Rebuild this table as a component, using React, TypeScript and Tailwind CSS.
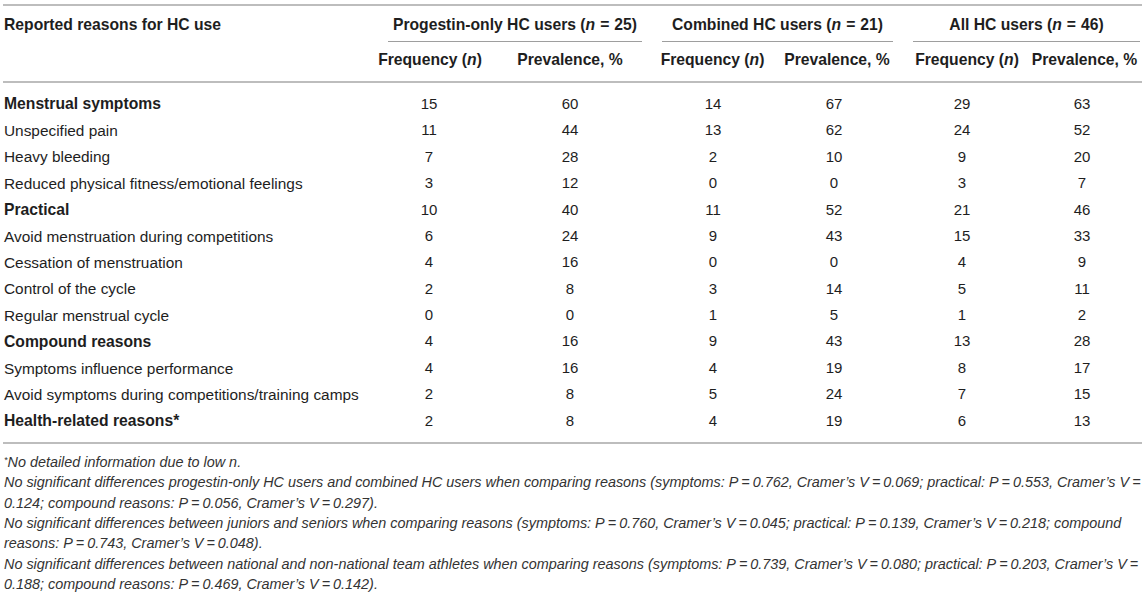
import React from 'react';

type Row = {
  label: string;
  bold?: boolean;
  values: number[];
};

const rows: Row[] = [
  { label: 'Menstrual symptoms', bold: true, values: [15, 60, 14, 67, 29, 63] },
  { label: 'Unspecified pain', values: [11, 44, 13, 62, 24, 52] },
  { label: 'Heavy bleeding', values: [7, 28, 2, 10, 9, 20] },
  { label: 'Reduced physical fitness/emotional feelings', values: [3, 12, 0, 0, 3, 7] },
  { label: 'Practical', bold: true, values: [10, 40, 11, 52, 21, 46] },
  { label: 'Avoid menstruation during competitions', values: [6, 24, 9, 43, 15, 33] },
  { label: 'Cessation of menstruation', values: [4, 16, 0, 0, 4, 9] },
  { label: 'Control of the cycle', values: [2, 8, 3, 14, 5, 11] },
  { label: 'Regular menstrual cycle', values: [0, 0, 1, 5, 1, 2] },
  { label: 'Compound reasons', bold: true, values: [4, 16, 9, 43, 13, 28] },
  { label: 'Symptoms influence performance', values: [4, 16, 4, 19, 8, 17] },
  { label: 'Avoid symptoms during competitions/training camps', values: [2, 8, 5, 24, 7, 15] },
  { label: 'Health-related reasons*', bold: true, values: [2, 8, 4, 19, 6, 13] },
];

// data column widths (px), written out so tailwind picks them up
const dataCols = ['w-[102px]', 'w-[180px]', 'w-[106px]', 'w-[136px]', 'w-[120px]', 'w-[120px]'];
const subCols = ['w-[104px]', 'w-[176px]', 'w-[109px]', 'w-[140px]', 'w-[120px]', 'w-[115px]'];

const groups = [
  { name: 'Progestin-only HC users', n: 25, cls: 'w-[274px] px-[10px]' },
  { name: 'Combined HC users', n: 21, cls: 'w-[251px] px-[10px]' },
  { name: 'All HC users', n: 46, cls: 'w-[239px] pl-[10px] pr-[2px]' },
];

const Eq = () => <span className="mx-[3px]">=</span>;

export default function App() {
  return (
    <div className="w-[1145px] bg-white px-[3px] pt-[4px] text-[15.4px] text-[#1e1e1e] font-['Liberation_Sans',Arial,sans-serif]">
      {/* Table */}
      <div className="border-t-2 border-b-2 border-[#bdbdbd]">
        {/* Header row 1 */}
        <div className="flex h-[36px] pt-[2px] font-bold text-[15.7px]">
          <div className="w-[375px] pl-[1px] flex items-center">Reported reasons for HC use</div>
          {groups.map((g) => (
            <div key={g.name} className={`${g.cls} flex`}>
              <div className="flex-1 flex items-center justify-center border-b border-[#9e9e9e]">
                <span>
                  {g.name} (<i>n</i>
                  <span className="mx-[5px]">=</span>
                  {g.n})
                </span>
              </div>
            </div>
          ))}
        </div>

        {/* Header row 2 */}
        <div className="flex h-[41px] pb-[3px] font-bold text-[15.7px] border-b-2 border-[#bdbdbd]">
          <div className="w-[375px]" />
          {subCols.map((w, i) => (
            <div key={i} className={`${w} flex items-center justify-center`}>
              {i % 2 === 0 ? (
                <span>
                  Frequency (<i>n</i>)
                </span>
              ) : (
                <span>Prevalence, %</span>
              )}
            </div>
          ))}
        </div>

        {/* Body */}
        <div className="pt-[8px] pb-[8px]">
          {rows.map((r) => (
            <div key={r.label} className="flex h-[26.4px] items-center">
              <div className={`w-[375px] pl-[1px] ${r.bold ? 'font-bold text-[15.7px]' : ''}`}>{r.label}</div>
              {r.values.map((v, i) => (
                <div key={i} className={`${dataCols[i]} text-center text-[15px]`}>
                  {v}
                </div>
              ))}
            </div>
          ))}
        </div>
      </div>

      {/* Footnotes */}
      <div className="mt-[8px] pl-[1px] italic text-[14.4px] leading-[20.3px] text-[#333] whitespace-nowrap">
        <div>
          <sup className="text-[9px]">*</sup>No detailed information due to low <i>n</i>.
        </div>
        <div>
          No significant differences progestin-only HC users and combined HC users when comparing reasons (symptoms: P<Eq />0.762, Cramer’s V<Eq />0.069; practical: P<Eq />0.553, Cramer’s V<Eq />
        </div>
        <div>
          0.124; compound reasons: P<Eq />0.056, Cramer’s V<Eq />0.297).
        </div>
        <div>
          No significant differences between juniors and seniors when comparing reasons (symptoms: P<Eq />0.760, Cramer’s V<Eq />0.045; practical: P<Eq />0.139, Cramer’s V<Eq />0.218; compound
        </div>
        <div>
          reasons: P<Eq />0.743, Cramer’s V<Eq />0.048).
        </div>
        <div>
          No significant differences between national and non-national team athletes when comparing reasons (symptoms: P<Eq />0.739, Cramer’s V<Eq />0.080; practical: P<Eq />0.203, Cramer’s V<Eq />
        </div>
        <div>
          0.188; compound reasons: P<Eq />0.469, Cramer’s V<Eq />0.142).
        </div>
      </div>
    </div>
  );
}
